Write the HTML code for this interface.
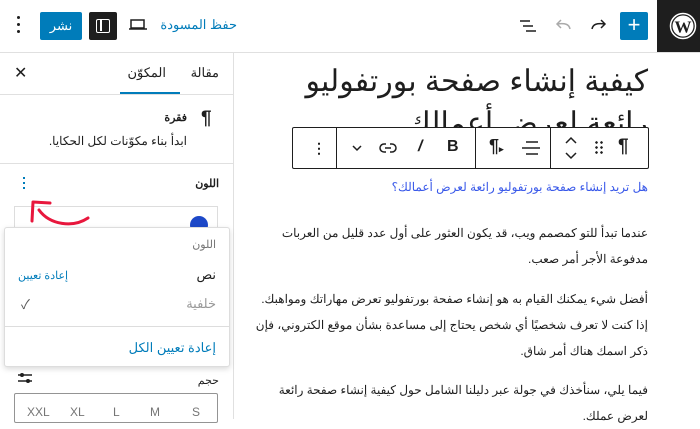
<!DOCTYPE html>
<html><head><meta charset="utf-8"><style>
*{margin:0;padding:0;box-sizing:border-box}
body{width:700px;height:419px;overflow:hidden;background:#fff;position:relative;font-family:"Liberation Sans","Noto Sans CJK SC",sans-serif;color:#1e1e1e}
.a{position:absolute}
.r{position:absolute;direction:rtl;white-space:nowrap}
.p{font-size:12px;color:#1e1e1e}
</style></head><body>
<!-- canvas -->
<div class="r" style="right:52px;top:61px;font-size:30px;line-height:42px">كيفية إنشاء صفحة بورتفوليو<br>رائعة لعرض أعمالك</div>
<div class="a" style="left:292px;top:127px;width:357px;height:42px;background:#fff;border:1px solid #1e1e1e;border-radius:2px"></div>
<div class="a" style="left:336px;top:127px;width:1px;height:42px;background:#1e1e1e"></div>
<div class="a" style="left:475px;top:127px;width:1px;height:42px;background:#1e1e1e"></div>
<div class="a" style="left:550px;top:127px;width:1px;height:42px;background:#1e1e1e"></div>
<div class="a" style="left:312px;top:140px;font-size:14px;font-weight:bold">⋮</div>
<svg class="a" style="left:350px;top:142px" width="14" height="12"><path d="M3 4l4 4 4-4" fill="none" stroke="#1e1e1e" stroke-width="1.5"/></svg>
<svg class="a" style="left:378px;top:140px" width="20" height="16"><path d="M8 4H6a4 4 0 000 8h2M12 4h2a4 4 0 010 8h-2M7 8h6" fill="none" stroke="#1e1e1e" stroke-width="1.5"/></svg>
<div class="a" style="left:418px;top:138px;font-size:16px;font-style:italic;font-weight:bold">/</div>
<div class="a" style="left:447px;top:138px;font-size:16px;font-weight:bold">B</div>
<div class="a" style="left:489px;top:136px;font-size:18px;font-weight:bold">¶<span style="font-size:9px">▸</span></div>
<svg class="a" style="left:520px;top:138px" width="22" height="20"><path d="M6 4h12M2 10h18M6 16h12" stroke="#1e1e1e" stroke-width="1.5"/></svg>
<svg class="a" style="left:563px;top:133px" width="16" height="30"><path d="M3 10l5-5 5 5M3 20l5 5 5-5" fill="none" stroke="#1e1e1e" stroke-width="1.5"/></svg>
<div class="a" style="left:594px;top:140px;width:9px;height:14px;background:radial-gradient(circle,#1e1e1e 1.2px,transparent 1.4px) 0 0/5px 5px"></div>
<div class="a" style="left:618px;top:136px;font-size:19px;font-weight:bold">¶</div>
<div class="r p" style="right:52px;top:180px;color:#3858e9">هل تريد إنشاء صفحة بورتفوليو رائعة لعرض أعمالك؟</div>
<div class="r p" style="right:52px;top:220px;line-height:26px">عندما تبدأ للتو كمصمم ويب، قد يكون العثور على أول عدد قليل من العربات<br>مدفوعة الأجر أمر صعب.</div>
<div class="r p" style="right:52px;top:286px;line-height:26px">أفضل شيء يمكنك القيام به هو إنشاء صفحة بورتفوليو تعرض مهاراتك ومواهبك.<br>إذا كنت لا تعرف شخصيًا أي شخص يحتاج إلى مساعدة بشأن موقع الكتروني، فإن<br>ذكر اسمك هناك أمر شاق.</div>
<div class="r p" style="right:52px;top:377px;line-height:26px">فيما يلي، سنأخذك في جولة عبر دليلنا الشامل حول كيفية إنشاء صفحة رائعة<br>لعرض عملك.</div>
<!-- sidebar bg -->
<div class="a" style="left:0;top:53px;width:233px;height:366px;background:#fff"></div>
<!-- topbar -->
<div class="a" style="left:0;top:0;width:700px;height:52px;background:#fff"></div>
<div class="a" style="left:0;top:52px;width:700px;height:1px;background:#e0e0e0"></div>
<div class="a" style="left:657px;top:0;width:43px;height:52px;background:#1e1e1e"></div>
<svg class="a" style="left:669px;top:12px" width="28" height="28" viewBox="0 0 28 28"><circle cx="14" cy="14" r="12.5" fill="none" stroke="#fff" stroke-width="1.5"/><circle cx="14" cy="14" r="10.5" fill="#fff"/><text x="14" y="20.5" text-anchor="middle" font-family="Liberation Serif" font-weight="bold" font-size="17" fill="#1e1e1e">W</text></svg>
<div class="a" style="left:620px;top:12px;width:28px;height:28px;background:#007cba;border-radius:2px;color:#fff;font-size:22px;line-height:26px;text-align:center">+</div>
<svg class="a" style="left:588px;top:16px" width="22" height="20"><path d="M4 13 C5 8 9 7 17 8 M13 4 L17 8 L13 12" fill="none" stroke="#1e1e1e" stroke-width="1.5"/></svg>
<svg class="a" style="left:552px;top:16px" width="22" height="20"><path d="M18 13 C17 8 13 7 5 8 M9 4 L5 8 L9 12" fill="none" stroke="#aaa" stroke-width="1.5"/></svg>
<svg class="a" style="left:517px;top:16px" width="22" height="20"><path d="M3 5h10M6 10h10M9 15h10" stroke="#1e1e1e" stroke-width="1.5"/></svg>
<div class="a" style="left:17px;top:16px;width:3px;height:18px"><div style="width:3px;height:3px;background:#1e1e1e;border-radius:50%;margin-bottom:4px"></div><div style="width:3px;height:3px;background:#1e1e1e;border-radius:50%;margin-bottom:4px"></div><div style="width:3px;height:3px;background:#1e1e1e;border-radius:50%"></div></div>
<div class="a" style="left:40px;top:12px;width:42px;height:28px;background:#007cba;border-radius:2px;color:#fff;font-size:13px;line-height:28px;text-align:center">نشر</div>
<div class="a" style="left:89px;top:12px;width:28px;height:28px;background:#1e1e1e;border-radius:2px"></div>
<div class="a" style="left:96px;top:19px;width:14px;height:14px;border:1.5px solid #fff;border-radius:2px"><div style="position:absolute;left:3px;top:0;width:1.5px;height:11px;background:#fff"></div></div>
<svg class="a" style="left:128px;top:17px" width="20" height="16"><rect x="3" y="3" width="13" height="8" fill="none" stroke="#1e1e1e" stroke-width="1.5"/><path d="M1 12h18" stroke="#1e1e1e" stroke-width="1.5"/></svg>
<div class="r" style="right:463px;top:17px;font-size:13px;color:#007cba">حفظ المسودة</div>
<!-- sidebar -->
<div class="a" style="left:233px;top:53px;width:1px;height:366px;background:#e0e0e0"></div>
<div class="a" style="left:0;top:94px;width:233px;height:1px;background:#e0e0e0"></div>
<div class="a" style="left:120px;top:92px;width:60px;height:2px;background:#007cba"></div>
<div class="r" style="right:481px;top:65px;font-size:13px">مقالة</div>
<div class="r" style="right:534px;top:65px;font-size:13px">المكوّن</div>
<div class="a" style="left:14px;top:63px;font-size:16px">✕</div>
<div class="a" style="left:201px;top:108px;font-size:19px;font-weight:bold">¶</div>
<div class="r" style="right:513px;top:111px;font-size:11px;font-weight:bold">فقرة</div>
<div class="r" style="right:513px;top:134px;font-size:12px">ابدأ بناء مكوّنات لكل الحكايا.</div>
<div class="a" style="left:0;top:163px;width:233px;height:1px;background:#e0e0e0"></div>
<div class="r" style="right:481px;top:177px;font-size:11px;font-weight:bold">اللون</div>
<div class="a" style="left:23px;top:177px;width:2px;height:14px"><div style="width:2px;height:2px;background:#007cba;margin-bottom:3px"></div><div style="width:2px;height:2px;background:#007cba;margin-bottom:3px"></div><div style="width:2px;height:2px;background:#007cba"></div></div>
<div class="a" style="left:14px;top:206px;width:204px;height:40px;border:1px solid #ddd"></div>
<div class="a" style="left:190px;top:216px;width:18px;height:18px;border-radius:50%;background:#1d48c8"></div>
<svg class="a" style="left:25px;top:193px" width="70" height="45"><path d="M8 9 L25 10 M8 9 L7 28 M14 17 C25 32 48 35 63 25" fill="none" stroke="#e8173d" stroke-width="3" stroke-linecap="round"/></svg>
<!-- popover -->
<div class="a" style="left:4px;top:227px;width:226px;height:140px;background:#fff;border:1px solid #ddd;border-radius:3px;box-shadow:0 2px 6px rgba(0,0,0,.15)"></div>
<div class="r" style="right:484px;top:238px;font-size:11px;color:#757575">اللون</div>
<div class="r" style="right:484px;top:267px;font-size:13px">نص</div>
<div class="a" style="left:18px;top:269px;font-size:11px;color:#007cba;direction:rtl">إعادة تعيين</div>
<div class="r" style="right:484px;top:296px;font-size:13px;color:#999">خلفية</div>
<div class="a" style="left:21px;top:294px;font-size:13px;color:#555">✓</div>
<div class="a" style="left:4px;top:326px;width:226px;height:1px;background:#ddd"></div>
<div class="r" style="right:484px;top:340px;font-size:13px;color:#007cba">إعادة تعيين الكل</div>
<!-- size -->
<svg class="a" style="left:17px;top:371px" width="16" height="14"><path d="M1 4h14M1 10h14" stroke="#1e1e1e" stroke-width="1.5"/><circle cx="5" cy="4" r="2" fill="#1e1e1e"/><circle cx="11" cy="10" r="2" fill="#1e1e1e"/></svg>
<div class="r" style="right:481px;top:374px;font-size:11px">حجم</div>
<div class="a" style="left:14px;top:393px;width:204px;height:30px;border:1px solid #949494;border-radius:2px"></div>
<div class="a" style="left:27px;top:405px;font-size:12px;color:#757575">XXL</div>
<div class="a" style="left:70px;top:405px;font-size:12px;color:#757575">XL</div>
<div class="a" style="left:113px;top:405px;font-size:12px;color:#757575">L</div>
<div class="a" style="left:150px;top:405px;font-size:12px;color:#757575">M</div>
<div class="a" style="left:192px;top:405px;font-size:12px;color:#757575">S</div>
</body></html>
